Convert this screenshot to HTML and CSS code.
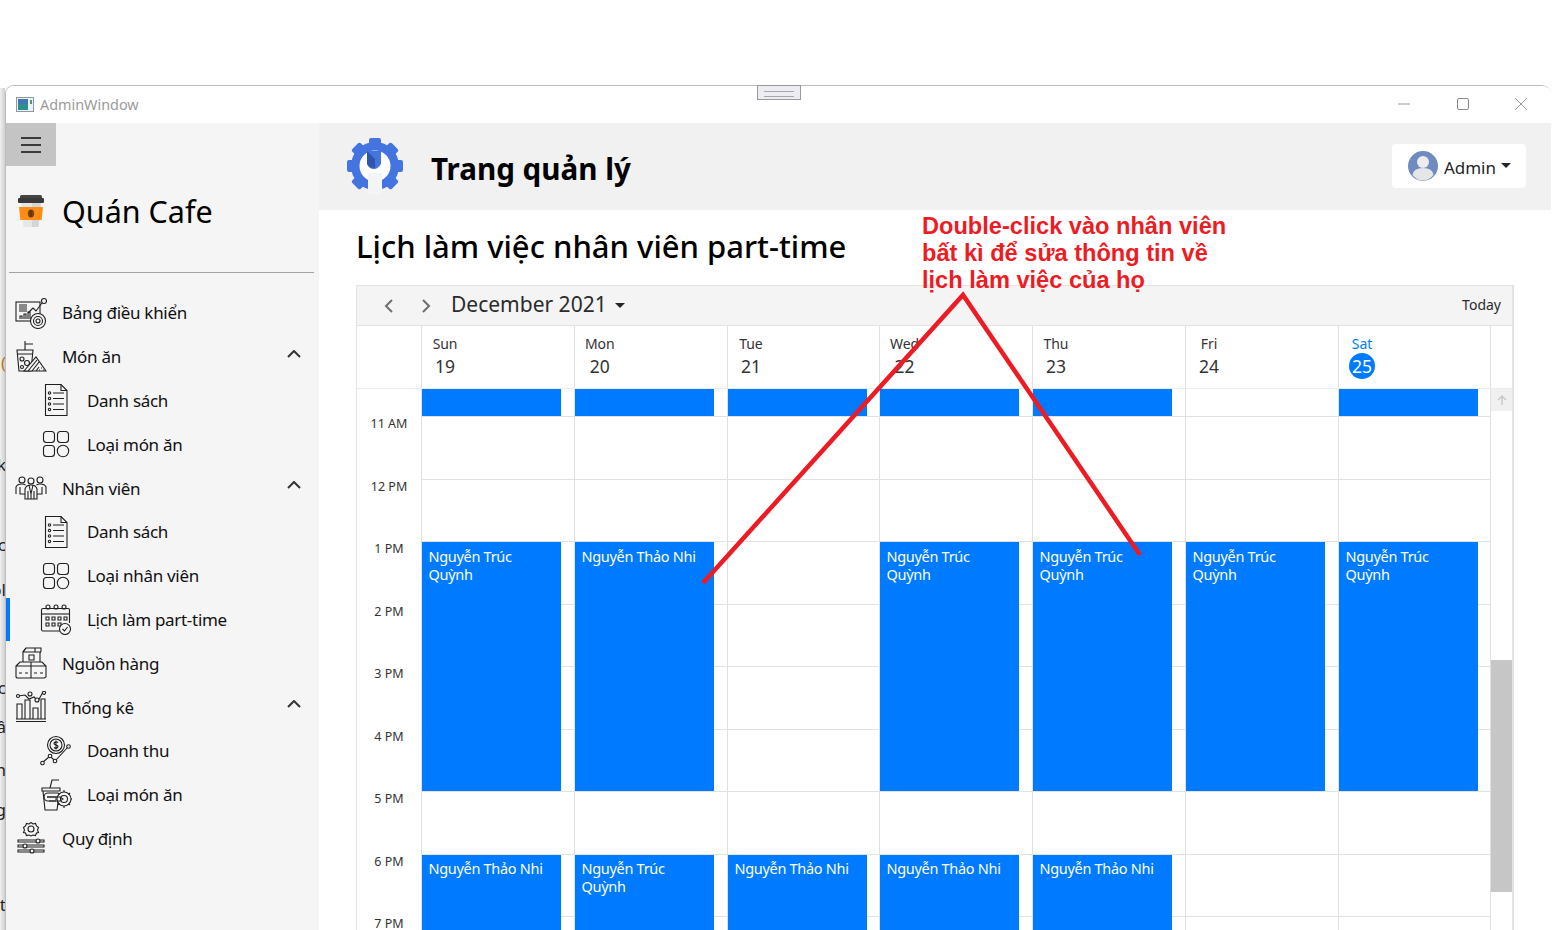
FILE: index.html
```html
<!DOCTYPE html>
<html lang="vi">
<head>
<meta charset="utf-8">
<title>AdminWindow</title>
<link rel="stylesheet" href="styles.css">
</head>
<body>
<div class="desktop">
  <div class="behind">
    <span class="frag f1">(</span><span class="frag f2">k</span><span class="frag f3">ic</span><span class="frag f4">ol</span><span class="frag f5">ic</span><span class="frag f6">â</span><span class="frag f7">n</span><span class="frag f8">g</span><span class="frag f9">t</span>
  </div>

  <div class="window">
    <div class="titlebar">
      <svg class="app-icon" width="18" height="15" viewBox="0 0 18 15"><rect x=".5" y=".5" width="17" height="14" fill="#eef1f4" stroke="#8d9aa5"/><rect x="2" y="2" width="10" height="11" fill="#2f8f8a"/><rect x="2" y="2" width="10" height="5" fill="#3f78b5"/><rect x="14" y="3" width="2" height="4" fill="#4d9a70"/></svg>
      <span class="app-name">AdminWindow</span>
      <div class="win-controls">
        <svg width="14" height="14" viewBox="0 0 14 14"><path d="M1 7h12" stroke="#9a9a9a" fill="none"/></svg>
        <svg width="14" height="14" viewBox="0 0 14 14"><rect x="1.500" y="1.500" width="11" height="11" rx="1.500" stroke="#8a8a8a" fill="none"/></svg>
        <svg width="14" height="14" viewBox="0 0 14 14"><path d="M1 1l12 12M13 1L1 13" stroke="#9a9a9a" fill="none"/></svg>
      </div>
    </div>

    <div class="app">
      <aside class="sidebar">
        <button class="burger" aria-label="Menu"><span></span><span></span><span></span></button>
        <div class="brand">
          <svg class="brand-cup" width="28" height="34" viewBox="0 0 28 34"><rect x="3" y="0" width="22" height="4" rx="1.500" fill="#444"/><rect x="1" y="3" width="26" height="5" rx="1" fill="#3a3a3a"/><path d="M4 8h20l-2.500 24h-15z" fill="#e6e6e6"/><path d="M15 8h9l-2.500 24H15z" fill="#d5d5d5"/><path d="M2 12h24l-1.400 13H3.400z" fill="#ff8c14"/><ellipse cx="14" cy="18.500" rx="3.200" ry="4" fill="#7a4314"/><path d="M14 15v7" stroke="#4c2908"/></svg>
          <span class="brand-name">Quán Cafe</span>
        </div>
        <div class="divider"></div>
        <nav class="menu">
          <a class="item">
            <svg class="ico" width="32" height="32" viewBox="0 0 32 32"><rect x="1" y="5" width="24" height="19"/><path d="M4 8h8M4 10h8M4 12h8M4 14h8"/><path d="M5 22v-3h2v3M9 22v-5h2v5M13 22v-7h2v7"/><path d="M13 16l5-5 3 3 6-8"/><circle cx="29" cy="4" r="2.500"/><circle cx="23" cy="24" r="7.500" class="fw"/><circle cx="23" cy="24" r="4.500"/><circle cx="23" cy="24" r="2"/></svg>
            <span>Bảng điều khiển</span>
          </a>
          <a class="item">
            <svg class="ico" width="32" height="32" viewBox="0 0 32 32"><path d="M2 9h16l-2 21H4zM3 13h14"/><path d="M10 9V3h8M10 3V0"/><circle cx="7" cy="18" r="2"/><circle cx="12" cy="22" r="2.500"/><circle cx="7" cy="26" r="1.500"/><path d="M9 30L21 16l10 14z" class="fw"/><path d="M13 30l9-11M17 30l7-9M21 30l3-4M26 27h1M24 29h1M28 29h1"/></svg>
            <span>Món ăn</span>
            <svg class="chev" width="14" height="8" viewBox="0 0 14 8"><path d="M1 7l6-6 6 6"/></svg>
          </a>
          <a class="item sub">
            <svg class="ico" width="32" height="32" viewBox="0 0 32 32"><path d="M5.500.5H21l6 6v25H5.500z"/><path d="M21 .5v6h6"/><path d="M13 9h11M13 14.500h11M13 20h11M13 25.500h11"/><circle cx="9.500" cy="9" r="1.200"/><circle cx="9.500" cy="14.500" r="1.200"/><circle cx="9.500" cy="20" r="1.200"/><circle cx="9.500" cy="25.500" r="1.200"/></svg>
            <span>Danh sách</span>
          </a>
          <a class="item sub">
            <svg class="ico" width="32" height="32" viewBox="0 0 32 32"><rect x="3.500" y="3.500" width="11" height="11" rx="3"/><rect x="17.500" y="3.500" width="11" height="11" rx="3"/><rect x="3.500" y="17.500" width="11" height="11" rx="3"/><circle cx="23" cy="23" r="5.700"/></svg>
            <span>Loại món ăn</span>
          </a>
          <a class="item">
            <svg class="ico" width="32" height="32" viewBox="0 0 32 32"><circle cx="7" cy="8" r="3"/><circle cx="16" cy="9" r="3"/><circle cx="25" cy="8" r="3"/><path d="M1 22v-7q1-3 6-3 2 0 3.500 1M31 22v-7q-1-3-6-3-2 0-3.500 1M5 15v7h5M27 15v7h-5"/><path d="M10 27V17q1-4 6-4t6 4v10zM14 13l2 9 2-9M13 19v8M19 19v8M16 22v5"/></svg>
            <span>Nhân viên</span>
            <svg class="chev" width="14" height="8" viewBox="0 0 14 8"><path d="M1 7l6-6 6 6"/></svg>
          </a>
          <a class="item sub">
            <svg class="ico" width="32" height="32" viewBox="0 0 32 32"><path d="M5.500.5H21l6 6v25H5.500z"/><path d="M21 .5v6h6"/><path d="M13 9h11M13 14.500h11M13 20h11M13 25.500h11"/><circle cx="9.500" cy="9" r="1.200"/><circle cx="9.500" cy="14.500" r="1.200"/><circle cx="9.500" cy="20" r="1.200"/><circle cx="9.500" cy="25.500" r="1.200"/></svg>
            <span>Danh sách</span>
          </a>
          <a class="item sub">
            <svg class="ico" width="32" height="32" viewBox="0 0 32 32"><rect x="3.500" y="3.500" width="11" height="11" rx="3"/><rect x="17.500" y="3.500" width="11" height="11" rx="3"/><rect x="3.500" y="17.500" width="11" height="11" rx="3"/><circle cx="23" cy="23" r="5.700"/></svg>
            <span>Loại nhân viên</span>
          </a>
          <a class="item sub active">
            <svg class="ico" width="32" height="32" viewBox="0 0 32 32"><path d="M24 28H3q-1.500 0-1.500-1.500V7Q1.500 5.500 3 5.500h25q1.500 0 1.500 1.500v13"/><path d="M1.500 11h28"/><circle cx="8" cy="4" r="2"/><circle cx="16" cy="4" r="2"/><circle cx="24" cy="4" r="2"/><path d="M6 14h3v3H6zM12 14h3v3h-3zM18 14h3v3h-3zM24 14h3v3h-3zM6 20h3v3H6zM12 20h3v3h-3zM18 20h3v3h-3z"/><circle cx="25" cy="26" r="5.500" class="fw"/><path d="M22.500 26l2 2 3-4"/></svg>
            <span>Lịch làm part-time</span>
          </a>
          <a class="item">
            <svg class="ico" width="32" height="32" viewBox="0 0 32 32"><path d="M8 15V5l3-4h15v3l-1 2v9"/><path d="M8 5h17M11 1l-3 4M20 1v4M14 8h5v5h-5z"/><path d="M1 19l4-4h22l4 4v11l-2 1H2l-1-1zM16 15v16M1 19h30"/><path d="M4 26h3M10 26h3M19 26h3M25 26h3"/></svg>
            <span>Nguồn hàng</span>
          </a>
          <a class="item">
            <svg class="ico" width="32" height="32" viewBox="0 0 32 32"><path d="M1 30.500h30M1 28h30"/><path d="M2 28V13h5v15M10 28V9h5v19M18 28V17h5v11M26 28V8h4v20"/><path d="M3 5l7-1 4 4 5-2 4 4 5-9"/><circle cx="3" cy="5" r="1.500" class="fw"/><circle cx="15" cy="3" r="2" class="fw"/><circle cx="22" cy="9" r="2" class="fw"/><circle cx="29" cy="1.800" r="1.600" class="fw"/></svg>
            <span>Thống kê</span>
            <svg class="chev" width="14" height="8" viewBox="0 0 14 8"><path d="M1 7l6-6 6 6"/></svg>
          </a>
          <a class="item sub">
            <svg class="ico" width="32" height="32" viewBox="0 0 32 32"><circle cx="16" cy="10" r="8.500"/><circle cx="16" cy="10" r="6"/><path d="M18 7.500q-2-1.500-3.500 0t1.500 2.500 1.500 2.500-3.500 0M16 5.500v9"/><path d="M2 28l8-7 5 5 13-14"/><circle cx="2.500" cy="28" r="1.800" class="fw"/><circle cx="10" cy="21" r="1.800" class="fw"/><circle cx="15" cy="26" r="1.800" class="fw"/><circle cx="28.500" cy="11.500" r="1.800" class="fw"/></svg>
            <span>Doanh thu</span>
          </a>
          <a class="item sub">
            <svg class="ico" width="32" height="32" viewBox="0 0 32 32"><path d="M2 9h18v3H2zM3 12l2 19h12l1-8"/><path d="M10 9l2-8h7"/><path d="M18 14H8a4 4 0 0 0 0 8h8M7 18h14"/><circle cx="24" cy="20" r="7" class="fw"/><circle cx="24" cy="20" r="3.500"/><path d="M24 11v2M24 27v2M15 20h2M31 20h2M18 14l1.500 1.500M30 14l-1.500 1.500M18 26l1.500-1.500M30 26l-1.500-1.500"/><path d="M7 18h13l3 2-3 2H9"/></svg>
            <span>Loại món ăn</span>
          </a>
          <a class="item">
            <svg class="ico" width="32" height="32" viewBox="0 0 32 32"><circle cx="16" cy="7" r="3"/><path d="M16 .5l2 1.500 2.500-.5 1 2.500 2 1.500-1 2.500 1 2.500-2 .5-1 2.500-2.500-.5-2 1-2-1-2.500.5-1-2.500-2-.5 1-2.500-1-2.500 2-1.500 1-2.500 2.500.5z"/><path d="M3 18h26v2H3zM3 23h26v2H3zM3 28h26v2H3z"/><circle cx="23" cy="19" r="2" class="fw"/><circle cx="10" cy="24" r="2" class="fw"/><circle cx="17" cy="29" r="2" class="fw"/></svg>
            <span>Quy định</span>
          </a>
        </nav>
      </aside>

      <main class="main">
        <header class="topbar">
          <svg class="logo" width="58" height="58" viewBox="0 0 58 58">
            <g fill="#4374e0">
              <circle cx="29" cy="29" r="24"/>
              <rect x="23" y="1" width="12" height="56" rx="2"/>
              <rect x="23" y="1" width="12" height="56" rx="2" transform="rotate(45 29 29)"/>
              <rect x="23" y="1" width="12" height="56" rx="2" transform="rotate(90 29 29)"/>
              <rect x="23" y="1" width="12" height="56" rx="2" transform="rotate(135 29 29)"/>
            </g>
            <circle cx="29" cy="29" r="15.500" fill="#fff"/>
            <rect x="22" y="36" width="14" height="21" fill="#f4f5f7"/>
            <path d="M21 14h14v13q-3 5-7 5-5 0-7-5z" fill="#4374e0"/>
            <path d="M21 14l8 8v9q-5 0-8-4z" fill="#2f55ad"/>
          </svg>
          <h1 class="page-title">Trang quản lý</h1>
          <button class="admin">
            <svg width="30" height="30" viewBox="0 0 30 30"><circle cx="15" cy="15" r="15" fill="#6f8bbf"/><circle cx="15" cy="11" r="6" fill="#ececec"/><path d="M4.500 24q1-7 10.500-7t10.500 7Q21 29.500 15 29.500T4.500 24z" fill="#e6e6e6"/></svg>
            <span>Admin</span>
            <i class="caret"></i>
          </button>
        </header>

        <section class="content">
          <h2 class="heading">Lịch làm việc nhân viên part-time</h2>
          <div class="calendar">
            <div class="toolbar">
              <svg class="nav" width="12" height="16" viewBox="0 0 12 16"><path d="M9 2L3 8l6 6"/></svg>
              <svg class="nav next" width="12" height="16" viewBox="0 0 12 16"><path d="M3 2l6 6-6 6"/></svg>
              <span class="month">December 2021</span>
              <i class="caret dark"></i>
              <span class="today">Today</span>
            </div>
            <div class="cal-head">
              <div class="gutter-head"></div>
              <div class="dh"><div class="dh-in"><span>Sun</span><b>19</b></div></div>
              <div class="dh"><div class="dh-in"><span>Mon</span><b>20</b></div></div>
              <div class="dh"><div class="dh-in"><span>Tue</span><b>21</b></div></div>
              <div class="dh"><div class="dh-in"><span>Wed</span><b>22</b></div></div>
              <div class="dh"><div class="dh-in"><span>Thu</span><b>23</b></div></div>
              <div class="dh"><div class="dh-in"><span>Fri</span><b>24</b></div></div>
              <div class="dh"><div class="dh-in now"><span>Sat</span><b>25</b></div></div>
              <div class="sc-head"></div>
            </div>
            <div class="cal-body">
              <div class="times">
                <div class="t">11 AM</div><div class="t">12 PM</div><div class="t">1 PM</div><div class="t">2 PM</div><div class="t">3 PM</div><div class="t">4 PM</div><div class="t">5 PM</div><div class="t">6 PM</div><div class="t">7 PM</div>
              </div>
              <div class="day">
                <div class="ev top"></div>
                <div class="ev mid">Nguyễn Trúc Quỳnh</div>
                <div class="ev eve">Nguyễn Thảo Nhi</div>
              </div>
              <div class="day">
                <div class="ev top"></div>
                <div class="ev mid">Nguyễn Thảo Nhi</div>
                <div class="ev eve">Nguyễn Trúc Quỳnh</div>
              </div>
              <div class="day">
                <div class="ev top"></div>
                <div class="ev eve">Nguyễn Thảo Nhi</div>
              </div>
              <div class="day">
                <div class="ev top"></div>
                <div class="ev mid">Nguyễn Trúc Quỳnh</div>
                <div class="ev eve">Nguyễn Thảo Nhi</div>
              </div>
              <div class="day">
                <div class="ev top"></div>
                <div class="ev mid">Nguyễn Trúc Quỳnh</div>
                <div class="ev eve">Nguyễn Thảo Nhi</div>
              </div>
              <div class="day">
                <div class="ev mid">Nguyễn Trúc Quỳnh</div>
              </div>
              <div class="day">
                <div class="ev top"></div>
                <div class="ev mid">Nguyễn Trúc Quỳnh</div>
              </div>
              <div class="scroll">
                <div class="sc-up"><svg width="12" height="12" viewBox="0 0 12 12"><path d="M6 11V2M2 6l4-4 4 4"/></svg></div>
                <div class="sc-thumb"></div>
              </div>
            </div>
          </div>
        </section>
      </main>
    </div>
  </div>

  <div class="grip"></div>

  <svg class="arrow" width="1552" height="930" viewBox="0 0 1552 930"><path d="M703 583L963 295 1140 555"/></svg>
  <p class="note">Double-click vào nhân viên<br>bất kì để sửa thông tin về<br>lịch làm việc của họ</p>
</div>
</body>
</html>
```

FILE: styles.css
```css
* { box-sizing: border-box; }
html, body { margin: 0; height: 100%; background: #fff; }
body { font-family: "Noto Sans", "Open Sans", sans-serif; color: #212529; overflow: hidden; }

.desktop { position: relative; width: 1552px; height: 930px; overflow: hidden; padding: 85px 0 0 5px; }

.behind { position: absolute; left: 0; top: 88px; width: 5px; bottom: 0; overflow: hidden; background: linear-gradient(90deg, #f0f0f0 0, #cfcfcf 100%); }
.frag { position: absolute; right: -1px; font-size: 17px; line-height: 20px; color: #222; }
.f1 { top: 265px; color: #b7791f; } .f2 { top: 367px; } .f3 { top: 447px; } .f4 { top: 492px; }
.f5 { top: 590px; } .f6 { top: 629px; } .f7 { top: 672px; } .f8 { top: 712px; } .f9 { top: 807px; }

.window { position: relative; width: 1546px; height: 845px; background: #fff; border: 1px solid #bdbdbd; border-bottom: 0; border-right: 0; border-radius: 9px 9px 0 0; overflow: hidden; }

.titlebar { display: flex; align-items: center; height: 37px; padding: 0 0 1px 10px; background: #fff; }
.app-icon { margin-right: 6px; }
.app-name { font-size: 14.400px; color: #9b9b9b; }
.win-controls { margin-left: auto; display: flex; gap: 44.500px; padding-right: 23px; margin-top: -1px; }

.app { display: flex; height: 808px; }

.sidebar { width: 313px; flex: none; background: #f5f5f5; }
.burger { display: flex; flex-direction: column; justify-content: center; gap: 5px; width: 50px; height: 43px; padding: 0 15px; border: 0; background: #c4c4c4; }
.burger span { display: block; height: 2px; background: #3a3a3a; }
.brand { display: flex; align-items: center; height: 106px; padding: 0 0 14px 11px; }
.brand-cup { margin-right: 17px; margin-top: -1px; }
.brand-name { font-size: 30.500px; color: #000; margin-top: -2px; }
.divider { height: 1px; margin: 0 5px 0 3px; background: #a3a3a3; }
.menu { padding-top: 18px; }
.item { position: relative; display: flex; align-items: center; gap: 15px; height: 43.800px; padding-left: 9px; font-size: 17px; letter-spacing: -.3px; color: #111; }
.item.sub { padding-left: 34px; }
.item.active::before { content: ""; position: absolute; left: 0; top: 0; width: 4px; height: 100%; background: #007bff; }
.ico { flex: none; fill: none; stroke: #1f1f1f; stroke-width: 1.100; }
.ico .fw { fill: #f5f5f5; }
.chev { margin-left: auto; margin-right: 18px; margin-bottom: 6px; fill: none; stroke: #333; stroke-width: 2; }

.main { flex: 1; min-width: 0; background: #fff; }
.topbar { display: flex; align-items: center; height: 87px; padding: 0 25px 0 27px; background: #f1f1f1; }
.logo { margin-top: -2px; flex: none; }
.page-title { margin: 4px 0 0 27px; font-size: 29.600px; font-weight: 700; color: #000; }
.admin { display: flex; align-items: center; margin-left: auto; height: 44px; padding: 0 15px 0 16px; border: 0; border-radius: 4px; background: #fff; font: inherit; font-size: 17px; color: #212529; margin-top: -1px; }
.admin svg { margin-right: 6px; }
.admin span { margin-top: 2px; }
.caret { display: inline-block; width: 0; height: 0; margin-left: 5px; margin-bottom: 1px; border: 5px solid transparent; border-bottom: 0; border-top-color: #212529; }

.content { padding: 0 37px; }
.heading { margin: 0; height: 75px; padding-top: 15px; font-size: 31px; line-height: 42px; font-weight: 500; color: #000; }

.calendar { border: 1px solid #e3e3e3; border-right-width: 2px; height: 700px; overflow: hidden; }
.toolbar { display: flex; align-items: center; height: 40px; padding: 0 11px 3px 26px; background: #f4f4f4; border-bottom: 1px solid #e3e3e3; }
.nav { fill: none; stroke: #6e6e6e; stroke-width: 2; margin-top: 3px; }
.nav.next { margin-left: 25px; }
.month { margin-left: 19px; font-size: 21px; color: #2b2b2b; }
.caret.dark { margin-left: 8px; margin-bottom: 0; margin-top: 3px; }
.today { margin-left: auto; font-size: 14px; color: #2b2b2b; }

.cal-head, .cal-body { display: grid; grid-template-columns: 64px 153px 153px 152px 153px 153px 153px 152px 1fr; }
.cal-head { height: 63px; border-bottom: 1px solid #ececec; }
.dh { border-left: 1px solid #e0e0e0; padding: 6px 0 0 10px; }
.sc-head { border-left: 1px solid #e0e0e0; }
.dh-in { display: inline-flex; flex-direction: column; align-items: center; min-width: 26px; color: #333; }
.dh-in span { font-size: 14px; line-height: 19px; letter-spacing: -.1px; }
.dh-in b { display: block; min-width: 26px; height: 26px; border-radius: 50%; font-weight: 400; font-size: 17.500px; line-height: 26px; text-align: center; }
.dh-in.now { color: #007bff; }
.dh-in.now b { background: #007bff; color: #fff; }

.cal-body { height: 600px; }
.times { padding-top: 27px; }
.t { height: 62.500px; font-size: 12.500px; line-height: 16px; text-align: center; color: #333; }
.day { display: grid; grid-template-rows: 27px repeat(9, 62.500px); border-left: 1px solid #e0e0e0; background-image: repeating-linear-gradient(to bottom, transparent 0, transparent 27.250px, #e2e2e2 27.250px, #e2e2e2 28.250px, transparent 28.250px, transparent 62.500px); }
.ev { width: 139px; background: #007bff; color: #fff; font-size: 14.500px; letter-spacing: -.3px; line-height: 18px; padding: 5px 12px 0 6.500px; }
.ev.top { grid-row: 1; padding: 0; }
.ev.mid { grid-row: 4 / span 4; margin-top: 1px; }
.ev.eve { grid-row: 9 / span 2; margin-top: 1px; padding-top: 4.500px; }

.scroll { border-left: 1px solid #e0e0e0; }
.sc-up { display: flex; align-items: center; justify-content: center; height: 22px; background: #f0f0f0; }
.sc-up svg { fill: none; stroke: #c9c9c9; stroke-width: 1.500; }
.sc-thumb { height: 232px; margin-top: 249px; background: #c6c6c6; }

.grip { position: absolute; left: 757px; top: 85px; width: 44px; height: 15px; background: #ececf2; border: 1px solid #9a9a9a; }
.grip::before { content: ""; position: absolute; left: 6px; right: 6px; top: 5px; height: 4px; border-top: 1px solid #a8a8a8; border-bottom: 1px solid #a8a8a8; }

.arrow { position: absolute; left: 0; top: 0; pointer-events: none; }
.arrow path { fill: none; stroke: #ed1c24; stroke-width: 4.500; }
.note { position: absolute; left: 922px; top: 213px; margin: 0; font-family: "Liberation Sans", Arial, sans-serif; font-weight: 700; font-size: 23.600px; line-height: 27px; color: #ed1c24; }
```
